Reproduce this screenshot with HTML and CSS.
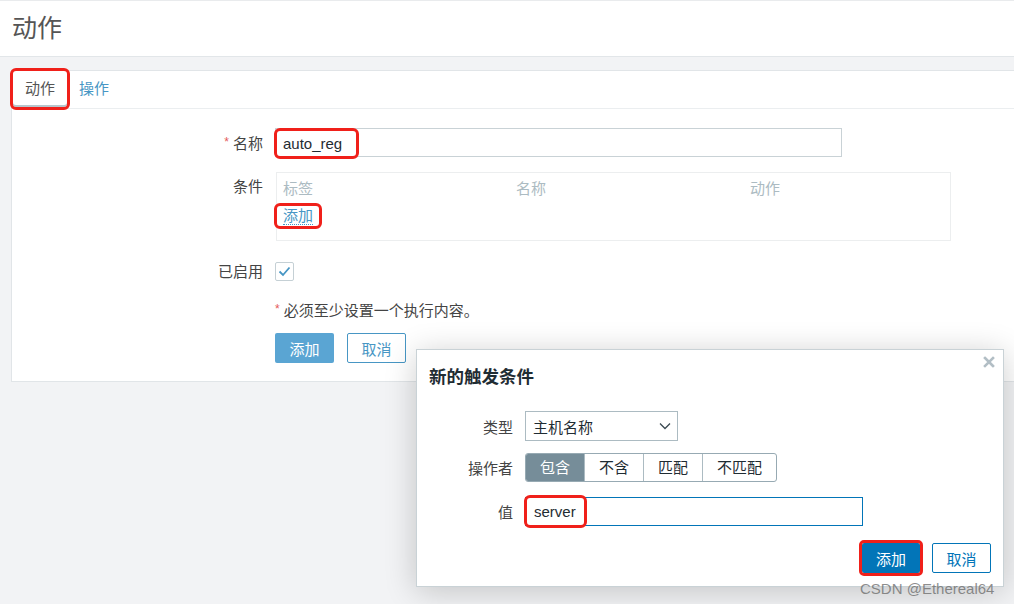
FILE: index.html
```html
<!DOCTYPE html>
<html lang="zh-CN">
<head>
    <meta charset="UTF-8">
    <title>动作</title>
    <link rel="stylesheet" href="styles.css">
</head>
<body>

    <!-- Page header -->
    <header class="page-header">
        <h1>动作</h1>
    </header>

    <!-- Action form card -->
    <div class="card">
        <ul class="tabs">
            <li class="tab active mark">动作</li>
            <li class="tab"><a class="tab-link">操作</a></li>
        </ul>

        <div class="form">
            <div class="form-row row-name">
                <label class="form-label"><span class="req">*</span> 名称</label>
                <div class="textbox name-box">
                    <span class="mark box-mark">auto_reg</span>
                </div>
            </div>

            <div class="form-row row-cond">
                <label class="form-label">条件</label>
                <div class="cond-table">
                    <div class="cond-head">
                        <span>标签</span>
                        <span>名称</span>
                        <span>动作</span>
                    </div>
                    <span class="mark link-mark"><a class="link">添加</a></span>
                </div>
            </div>

            <div class="form-row row-enabled">
                <label class="form-label label-short">已启用</label>
                <span class="checkbox">
                    <svg width="13" height="11" viewBox="0 0 13 11">
                        <polyline points="1.5,5.5 5,9 11.5,1.5" fill="none" stroke="#4796c4" stroke-width="1.8"/>
                    </svg>
                </span>
            </div>

            <div class="form-row row-note">
                <div class="form-label label-short"></div>
                <div class="note"><span class="req">*</span> 必须至少设置一个执行内容。</div>
            </div>

            <div class="form-row">
                <div class="form-label"></div>
                <div class="btn-group">
                    <button class="btn btn-light">添加</button>
                    <button class="btn btn-alt">取消</button>
                </div>
            </div>
        </div>
    </div>

    <!-- New condition dialog -->
    <div class="dialog">
        <svg class="dialog-close" width="12" height="12" viewBox="0 0 12 12">
            <path d="M2 2 L10 10 M10 2 L2 10" stroke="#b2bec5" stroke-width="2.6" stroke-linecap="square"/>
        </svg>
        <h2 class="dialog-title">新的触发条件</h2>

        <div class="dialog-row row-type">
            <label class="dialog-label">类型</label>
            <div class="select">
                <span>主机名称</span>
                <svg width="12" height="8" viewBox="0 0 12 8">
                    <polyline points="1,1.5 6,6.5 11,1.5" fill="none" stroke="#3b4a52" stroke-width="1.3"/>
                </svg>
            </div>
        </div>

        <div class="dialog-row row-op">
            <label class="dialog-label">操作者</label>
            <ul class="radio-seg">
                <li class="seg selected">包含</li>
                <li class="seg">不含</li>
                <li class="seg">匹配</li>
                <li class="seg">不匹配</li>
            </ul>
        </div>

        <div class="dialog-row row-value">
            <label class="dialog-label">值</label>
            <div class="textbox value-box">
                <span class="mark value-mark">server</span>
            </div>
        </div>

        <div class="dialog-footer">
            <button class="btn btn-main mark">添加</button>
            <button class="btn btn-alt-dark">取消</button>
        </div>
    </div>

    <div class="watermark">CSDN @Ethereal64</div>

</body>
</html>
```

FILE: styles.css
```css
/* Base */
body {
    margin: 0;
    height: 604px;
    overflow: hidden;
    position: relative;
    background-color: #f2f3f5;
    font-family: "Liberation Sans", "Noto Sans CJK SC", sans-serif;
    font-size: 15px;
    color: #1f2c33;
}

ul { list-style: none; margin: 0; padding: 0; }
button { font-family: inherit; }

/* Red annotation boxes */
.mark {
    outline: 3px solid #f0201a;
    border-radius: 3px;
}

/* Header */
.page-header {
    height: 55px;
    background-color: #fff;
    border-top: 1px solid #e9ebed;
    border-bottom: 1px solid #e2e6e9;
}
.page-header h1 {
    margin: 0;
    padding-left: 12px;
    font-size: 25px;
    font-weight: normal;
    line-height: 55px;
    color: #555;
}

/* Card */
.card {
    margin: 13px -20px 0 11px;
    background-color: #fff;
    border: 1px solid #e1e5e8;
    padding-bottom: 18px;
}

/* Tabs */
.tabs {
    display: flex;
    height: 37px;
    padding-left: 1px;
    border-bottom: 1px solid #ebeef0;
}
.tab {
    padding: 0 12px;
    height: 36px;
    line-height: 36px;
    color: #555;
}
.tab.active {
    box-shadow: inset 0 -2px 0 #b7c6cd;
}
.tab-link { color: #4796c4; }

/* Form */
.form { padding-top: 19px; }
.form-row { display: flex; }
.form-label {
    flex: 0 0 251px;
    margin-right: 12px;
    text-align: right;
    line-height: 29px;
    color: #444;
}
.form-label.label-short { line-height: 19px; }
.req {
    color: #e45959;
    font-size: 12px;
    vertical-align: 3px;
}

.row-name { margin-bottom: 14px; }
.row-cond { margin-bottom: 21px; }
.row-enabled { margin-bottom: 18px; align-items: center; }
.row-note { margin-bottom: 12px; }

.textbox {
    box-sizing: border-box;
    height: 29px;
    border: 1px solid #c9d2d6;
    background-color: #fff;
}
.name-box { width: 567px; }
.box-mark {
    display: inline-block;
    margin: 2px 0 0 1px;
    padding: 0 14px 0 6px;
    height: 25px;
    line-height: 25px;
}

.cond-table {
    box-sizing: border-box;
    width: 675px;
    height: 69px;
    margin-left: 1px;
    border: 1px solid #eceeef;
    padding-top: 6px;
}
.cond-head {
    display: grid;
    grid-template-columns: 233px 234px 1fr;
    padding-left: 6px;
    line-height: 20px;
    color: #acbbc2;
}
.link-mark {
    display: inline-block;
    margin: 7px 0 0 0;
    padding: 0 6px;
    height: 20px;
    line-height: 20px;
}
.link {
    color: #4796c4;
    border-bottom: 1px dotted #4796c4;
}

.checkbox {
    box-sizing: border-box;
    display: flex;
    align-items: center;
    justify-content: center;
    width: 19px;
    height: 19px;
    border: 1px solid #c5d0d5;
    border-radius: 2px;
}

.note {
    line-height: 20px;
    color: #444;
}

/* Buttons */
.btn-group { display: flex; gap: 13px; }
.btn {
    box-sizing: border-box;
    height: 30px;
    width: 59px;
    padding: 0;
    border-radius: 2px;
    font-size: 15px;
    cursor: pointer;
}
.btn-light {
    border: none;
    background-color: #5aa5d3;
    color: #fff;
}
.btn-alt {
    border: 1px solid #4796c4;
    background-color: #fff;
    color: #4796c4;
}
.btn-main {
    width: 58px;
    border: none;
    background-color: #0275b8;
    color: #fff;
}
.btn-alt-dark {
    border: 1px solid #0275b8;
    background-color: #fff;
    color: #0275b8;
}

/* Dialog */
.dialog {
    position: absolute;
    left: 416px;
    top: 349px;
    box-sizing: border-box;
    width: 588px;
    height: 238px;
    padding: 0 12px;
    background-color: #fff;
    border: 1px solid #c9d2d6;
    box-shadow: 0 4px 30px rgba(0, 0, 0, 0.2);
}
.dialog-close {
    position: absolute;
    right: 8px;
    top: 6px;
}
.dialog-title {
    margin: 0 0 21px;
    padding-top: 14px;
    font-size: 17.5px;
    line-height: 26px;
    color: #1f2c33;
}
.dialog-row { display: flex; align-items: center; }
.dialog-label {
    flex: 0 0 84px;
    margin-right: 12px;
    text-align: right;
    color: #444;
}
.row-type { margin-bottom: 12px; }
.row-op { margin-bottom: 15px; }

.select {
    box-sizing: border-box;
    display: flex;
    align-items: center;
    justify-content: space-between;
    width: 153px;
    height: 30px;
    padding: 0 6px 0 7px;
    border: 1px solid #acbbc2;
}

.radio-seg {
    display: flex;
    box-sizing: border-box;
    height: 29px;
    border: 1px solid #97aab3;
    border-radius: 3px;
    overflow: hidden;
}
.seg {
    box-sizing: border-box;
    padding: 0 14px;
    line-height: 27px;
    border-left: 1px solid #acbbc2;
}
.seg:first-child { border-left: none; }
.seg.selected {
    background-color: #768d99;
    color: #fff;
}

.value-box {
    width: 338px;
    border-color: #0275b8;
}
.value-mark {
    display: inline-block;
    margin: 0 0 0 1px;
    padding: 0 8px 0 7px;
    height: 27px;
    line-height: 27px;
}

.dialog-footer {
    display: flex;
    justify-content: flex-end;
    gap: 12px;
    margin-top: 17px;
}

.watermark {
    position: absolute;
    left: 860px;
    top: 580px;
    font-size: 15px;
    line-height: 18px;
    color: rgba(105, 105, 105, 0.75);
}
```
